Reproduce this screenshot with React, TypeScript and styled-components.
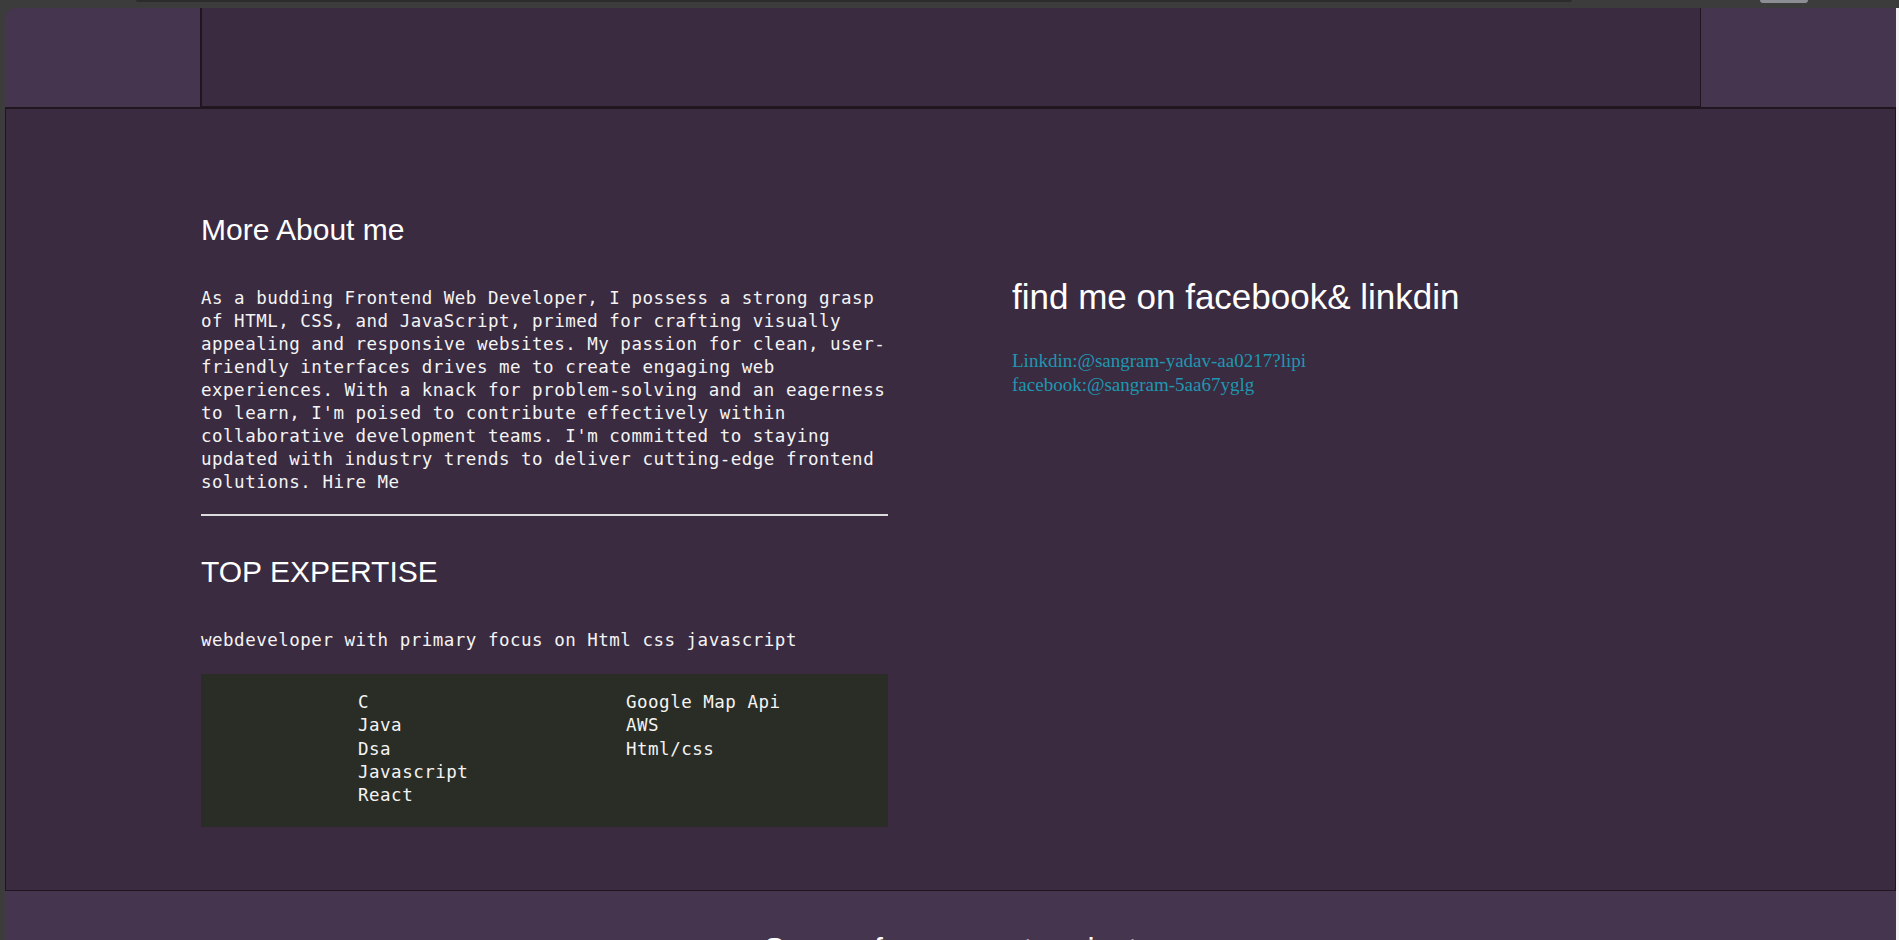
import React from 'react'
import styled, { createGlobalStyle } from 'styled-components'

const side = '#46354f'
const panel = '#3a2b41'
const line = '#201620'

const GlobalStyle = createGlobalStyle`
    html, body {
        margin: 0;
        padding: 0;
        background: #3c3c3c;
        overflow: hidden;
    }
`

const Screen = styled.div`
    width: 1899px;
    height: 940px;
    display: flex;
    flex-direction: column;
    background: #3c3c3c;
`

const TopStrip = styled.div`
    height: 8px;
    flex: none;
    display: flex;
    align-items: flex-start;
`

const TabBar = styled.div`
    margin-left: 136px;
    width: 1436px;
    height: 2px;
    background: #2c2c2c;
    border-radius: 0 0 4px 4px;
`

const Pill = styled.div`
    margin-left: 188px;
    width: 48px;
    height: 3px;
    background: #8b8e93;
    border-radius: 0 0 4px 4px;
`

const Body = styled.div`
    flex: 1;
    display: flex;
    padding: 0 0 4px 5px;
`

const WhiteEdge = styled.div`
    width: 3px;
    background: #f4f4f4;
`

const Window = styled.div`
    flex: 1;
    display: flex;
    flex-direction: column;
    background: ${side};
    border-radius: 12px 0 0 12px;
    overflow: hidden;
`

const Header = styled.header`
    height: 99px;
    flex: none;
    display: flex;
`

const SideBlock = styled.div`
    width: 195px;
    background: ${side};
`

const HeaderMiddle = styled.div`
    flex: 1;
    background: ${panel};
    border-left: 2px solid ${line};
    border-right: 1px solid ${line};
    border-bottom: 1px solid ${line};
`

const Main = styled.main`
    flex: none;
    background: ${panel};
    border: 1px solid ${line};
    border-top: 2px solid ${line};
    display: grid;
    grid-template-columns: 687px 1fr;
    column-gap: 124px;
    padding: 103px 0 63px 195px;
`

const Column = styled.section<{ offset?: number }>`
    display: flex;
    flex-direction: column;
    padding-top: ${props => props.offset || 0}px;
`

const Heading = styled.h2<{ size?: number; gap?: number }>`
    margin: ${props => props.gap || 0}px 0 0;
    font-family: "Liberation Sans", Arial, sans-serif;
    font-weight: normal;
    font-size: ${props => props.size || 30}px;
    line-height: ${props => (props.size || 30) + 5}px;
    color: #ffffff;
`

const MonoText = styled.p<{ gap?: number }>`
    margin: ${props => props.gap || 0}px 0 0;
    font-family: "DejaVu Sans Mono", monospace;
    font-size: 17.5px;
    letter-spacing: 0.5px;
    line-height: 23px;
    color: #f4f4f4;
`

const Rule = styled.hr`
    margin: 20px 0 0;
    border: none;
    border-top: 2px solid #dcdcdc;
    height: 0;
`

const SkillBox = styled.div`
    margin-top: 22px;
    background: #2a2d25;
    display: grid;
    grid-template-columns: 268px auto;
    padding: 17px 0 20px 157px;
`

const SkillList = styled.ul`
    margin: 0;
    padding: 0;
    list-style: none;
    font-family: "DejaVu Sans Mono", monospace;
    font-size: 17.5px;
    letter-spacing: 0.5px;
    line-height: 23.3px;
    color: #f4f4f4;
`

const Links = styled.div`
    margin-top: 32px;
    display: flex;
    flex-direction: column;
`

const SocialLink = styled.a`
    font-family: "Liberation Serif", "Times New Roman", serif;
    font-size: 19px;
    line-height: 24px;
    color: #1f97b0;
    text-decoration: none;
`

const Footer = styled.footer`
    flex: 1;
    background: ${side};
    padding: 40px 0 0 16px;
    text-align: center;
`

const leftSkills = ['C', 'Java', 'Dsa', 'Javascript', 'React']
const rightSkills = ['Google Map Api', 'AWS', 'Html/css']

function App() {
    return (
        <>
            <GlobalStyle />
            <Screen>
                <TopStrip>
                    <TabBar />
                    <Pill />
                </TopStrip>
                <Body>
                    <Window>
                        <Header>
                            <SideBlock />
                            <HeaderMiddle />
                            <SideBlock />
                        </Header>
                        <Main>
                            <Column>
                                <Heading>More About me</Heading>
                                <MonoText gap={40}>
                                    As a budding Frontend Web Developer, I possess a strong grasp of HTML, CSS, and JavaScript, primed for crafting visually appealing and responsive websites. My passion for clean, user-friendly interfaces drives me to create engaging web experiences. With a knack for problem-solving and an eagerness to learn, I'm poised to contribute effectively within collaborative development teams. I'm committed to staying updated with industry trends to deliver cutting-edge frontend solutions. Hire Me
                                </MonoText>
                                <Rule />
                                <Heading gap={38}>TOP EXPERTISE</Heading>
                                <MonoText gap={40}>webdeveloper with primary focus on Html css javascript</MonoText>
                                <SkillBox>
                                    <SkillList>
                                        {leftSkills.map(s => <li key={s}>{s}</li>)}
                                    </SkillList>
                                    <SkillList>
                                        {rightSkills.map(s => <li key={s}>{s}</li>)}
                                    </SkillList>
                                </SkillBox>
                            </Column>
                            <Column offset={65}>
                                <Heading size={35}>find me on facebook&amp; linkdin</Heading>
                                <Links>
                                    <SocialLink href="#">Linkdin:@sangram-yadav-aa0217?lipi</SocialLink>
                                    <SocialLink href="#">facebook:@sangram-5aa67yglg</SocialLink>
                                </Links>
                            </Column>
                        </Main>
                        <Footer>
                            <Heading size={32}>Some of my recent projects</Heading>
                        </Footer>
                    </Window>
                    <WhiteEdge />
                </Body>
            </Screen>
        </>
    )
}

export default App
